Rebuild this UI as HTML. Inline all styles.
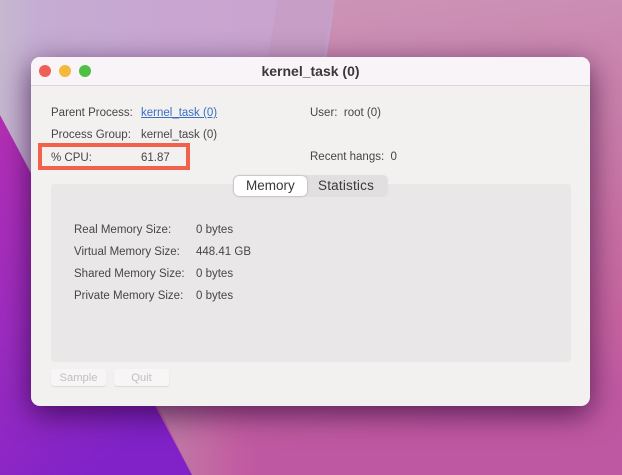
<!DOCTYPE html>
<html>
<head>
<meta charset="utf-8">
<style>
html,body{margin:0;padding:0;width:622px;height:475px;overflow:hidden}
body{position:relative;font-family:"Liberation Sans",sans-serif;color:#3c3a3c;background:#c88ab0}
svg.bg{position:absolute;left:0;top:0}
.win{position:absolute;left:31px;top:57px;width:559px;height:349px;border-radius:9px;background:#f3f0f0;box-shadow:0 8px 30px rgba(40,0,50,.7);overflow:hidden;filter:blur(.3px)}
.bar{position:absolute;left:0;top:0;right:0;height:28px;background:#f8f4f7;border-bottom:1px solid #dad6d8}
.dot{position:absolute;top:8px;width:12px;height:12px;border-radius:50%}
.title{position:absolute;left:0;right:0;top:6px;text-align:center;font-weight:bold;font-size:14px;color:#3a383a;line-height:16px}
.t{position:absolute;font-size:11.5px;line-height:14px;white-space:nowrap;color:#474547}
.panel{position:absolute;left:20px;top:127px;width:520px;height:178px;background:#eae7e8;border-radius:3px}
.seg{position:absolute;left:202px;top:118px;width:155px;height:22px;background:#e2dfe0;border-radius:5px}
.segon{position:absolute;left:203px;top:119px;width:73px;height:20px;background:#fff;border-radius:5px;box-shadow:0 0 2px rgba(0,0,0,.3)}
.segt{position:absolute;font-size:13.5px;line-height:16px;top:121px;color:#3a383a}
.btn{position:absolute;top:312px;height:17px;background:#f7f5f5;border-radius:3px;box-shadow:0 1px 1px rgba(0,0,0,.1);font-size:11.2px;line-height:18px;text-align:center;color:#c0bebf}
.hl{position:absolute;left:38px;top:143px;width:144px;height:19px;border:4px solid #f0624c;box-sizing:content-box}
</style>
</head>
<body>
<svg class="bg" width="622" height="475" viewBox="0 0 622 475">
<defs>
<linearGradient id="a" x1="0" y1="0" x2="1" y2="0"><stop offset="0" stop-color="#c6b8d0"/><stop offset=".12" stop-color="#c4acd2"/><stop offset=".5" stop-color="#c9a6d2"/><stop offset="1" stop-color="#c8a2cc"/></linearGradient>
<linearGradient id="b" x1="0" y1="0" x2="0.2" y2="1"><stop offset="0" stop-color="#d09cbd"/><stop offset=".12" stop-color="#cc92b6"/><stop offset=".45" stop-color="#c87ca8"/><stop offset=".85" stop-color="#c6629f"/><stop offset="1" stop-color="#bf58a2"/></linearGradient>
<linearGradient id="c" x1="0" y1="0" x2="0.5" y2="1"><stop offset="0" stop-color="#b42fb4"/><stop offset=".5" stop-color="#9c2cc0"/><stop offset="1" stop-color="#8022c8"/></linearGradient>
<linearGradient id="d" x1="0" y1="0" x2="1" y2="0"><stop offset="0" stop-color="#bc80a6"/><stop offset=".5" stop-color="#c470a4" stop-opacity=".7"/><stop offset="1" stop-color="#c462a0" stop-opacity="0"/></linearGradient>
</defs>
<rect width="622" height="475" fill="url(#b)"/>
<polygon points="0,0 335,0 300,240 157,400 0,400" fill="url(#a)"/>
<polygon points="278,0 335,0 323,57 268,57" fill="#c69ec6"/>
<polygon points="157,404 192,475 260,475 260,404" fill="url(#d)"/>
<polygon points="0,115 192,475 0,475" fill="url(#c)"/>
</svg>
<div class="win">
  <div class="bar"></div>
  <div class="dot" style="left:8px;background:#ee5f55"></div>
  <div class="dot" style="left:28px;background:#f4b93a"></div>
  <div class="dot" style="left:48px;background:#4fc043"></div>
  <div class="title">kernel_task (0)</div>
  <div class="t" style="left:20px;top:49px">Parent Process:</div>
  <div class="t" style="left:110px;top:49px;color:#3a6fc4;text-decoration:underline">kernel_task (0)</div>
  <div class="t" style="left:279px;top:49px">User:&nbsp; root (0)</div>
  <div class="t" style="left:20px;top:71px">Process Group:</div>
  <div class="t" style="left:110px;top:71px">kernel_task (0)</div>
  <div class="t" style="left:20px;top:94px">% CPU:</div>
  <div class="t" style="left:110px;top:94px">61.87</div>
  <div class="t" style="left:279px;top:93px">Recent hangs:&nbsp; 0</div>
  <div class="panel"></div>
  <div class="seg"></div>
  <div class="segon"></div>
  <div class="segt" style="left:215px">Memory</div>
  <div class="segt" style="left:287px;letter-spacing:.2px">Statistics</div>
  <div class="t" style="left:43px;top:166px">Real Memory Size:</div>
  <div class="t" style="left:165px;top:166px">0 bytes</div>
  <div class="t" style="left:43px;top:188px">Virtual Memory Size:</div>
  <div class="t" style="left:165px;top:188px">448.41 GB</div>
  <div class="t" style="left:43px;top:210px">Shared Memory Size:</div>
  <div class="t" style="left:165px;top:210px">0 bytes</div>
  <div class="t" style="left:43px;top:232px">Private Memory Size:</div>
  <div class="t" style="left:165px;top:232px">0 bytes</div>
  <div class="btn" style="left:20px;width:55px">Sample</div>
  <div class="btn" style="left:83px;width:55px">Quit</div>
</div>
<div class="hl"></div>
</body>
</html>
